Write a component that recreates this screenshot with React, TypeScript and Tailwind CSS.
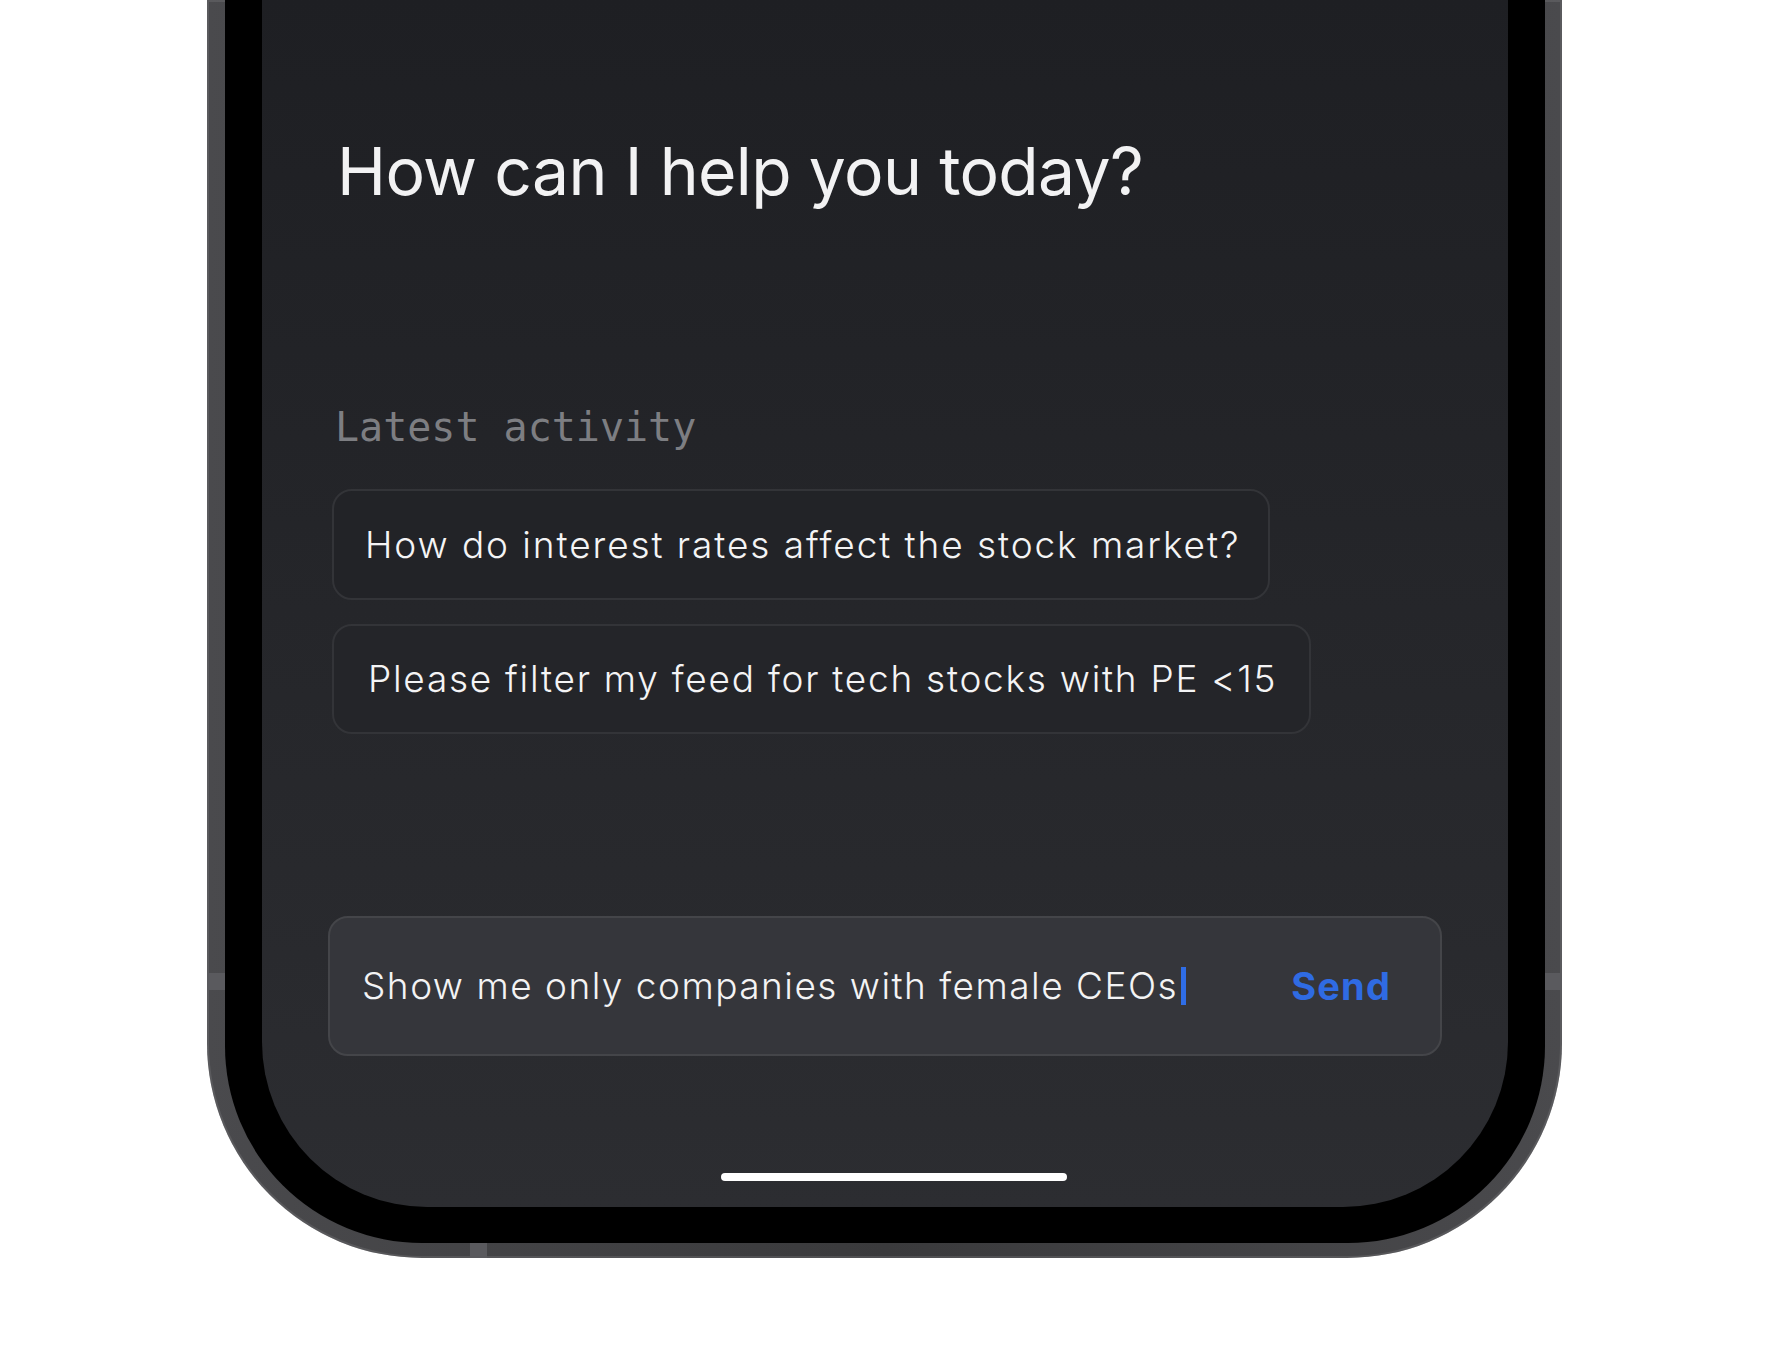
import React from "react";

export default function App() {
  return (
    <div className="w-[1771px] h-[1354px] bg-white overflow-hidden">
      <div className="relative ml-[207px] w-[1355px] h-[1258px] rounded-b-[215px] bg-gradient-to-r from-[#4a4a4d] via-[#3a3a3c] to-[#4a4a4d] pl-[18px] pr-[17px] pb-[15px] shadow-[inset_0_0_0_2px_rgba(120,120,124,0.35)]">
        {/* antenna bands */}
        <div className="absolute left-0 top-[973px] w-[18px] h-[17px] bg-[#5a5a5e]" />
        <div className="absolute right-0 top-[973px] w-[17px] h-[17px] bg-[#5a5a5e]" />
        <div className="absolute bottom-0 left-[263px] w-[17px] h-[15px] bg-[#5a5a5e]" />
        <div className="relative h-full rounded-b-[197px] bg-black pl-[37px] pr-[37px] pb-[36px]">
          <div
            className="h-full rounded-b-[165px] bg-gradient-to-b from-[#1e1f23] to-[#2c2d31] flex flex-col px-[66px]"
            style={{ fontFamily: "Inter, 'Noto Sans', sans-serif" }}
          >
            <h1 className="mt-[138px] ml-[9px] text-[66px] leading-[66px] font-normal text-[#f2f2f3] tracking-[-0.01em]">
              How can I help you today?
            </h1>
            <div
              className="mt-[203px] ml-[7px] text-[40px] leading-[40px] text-[#7d7e82]"
              style={{ fontFamily: "'DejaVu Sans Mono', 'Liberation Mono', monospace" }}
            >
              Latest activity
            </div>
            <div className="mt-[42px] ml-[4px] flex flex-col items-start gap-[24px]">
              <div className="h-[111px] flex items-center rounded-[20px] border-2 border-[#333438] bg-[#222327] pl-[31px] pr-[28px] text-[37px] font-light tracking-[0.052em] text-[#f4f4f5]">
                How do interest rates affect the stock market?
              </div>
              <div className="h-[110px] flex items-center rounded-[20px] border-2 border-[#333438] bg-[#242529] pl-[34px] pr-[32px] text-[37px] font-light tracking-[0.047em] text-[#f4f4f5]">
                Please filter my feed for tech stocks with PE &lt;15
              </div>
            </div>
            <div className="mt-[182px] h-[140px] flex items-center rounded-[20px] border-2 border-[#444549] bg-[#35363b] pl-[32px] pr-[49px]">
              <div className="flex-1 flex items-center text-[37px] font-light tracking-[0.04em] text-[#f3f3f4]">
                <span>Show me only companies with female CEOs</span>
                <span className="ml-[3px] inline-block w-[5px] h-[38px] bg-[#2f6de6]" />
              </div>
              <div className="text-[38px] font-bold tracking-[0.03em] text-[#2f6be3]">Send</div>
            </div>
            <div className="mt-[117px] ml-[393px] w-[346px] h-[8px] rounded-full bg-white" />
          </div>
        </div>
      </div>
    </div>
  );
}
